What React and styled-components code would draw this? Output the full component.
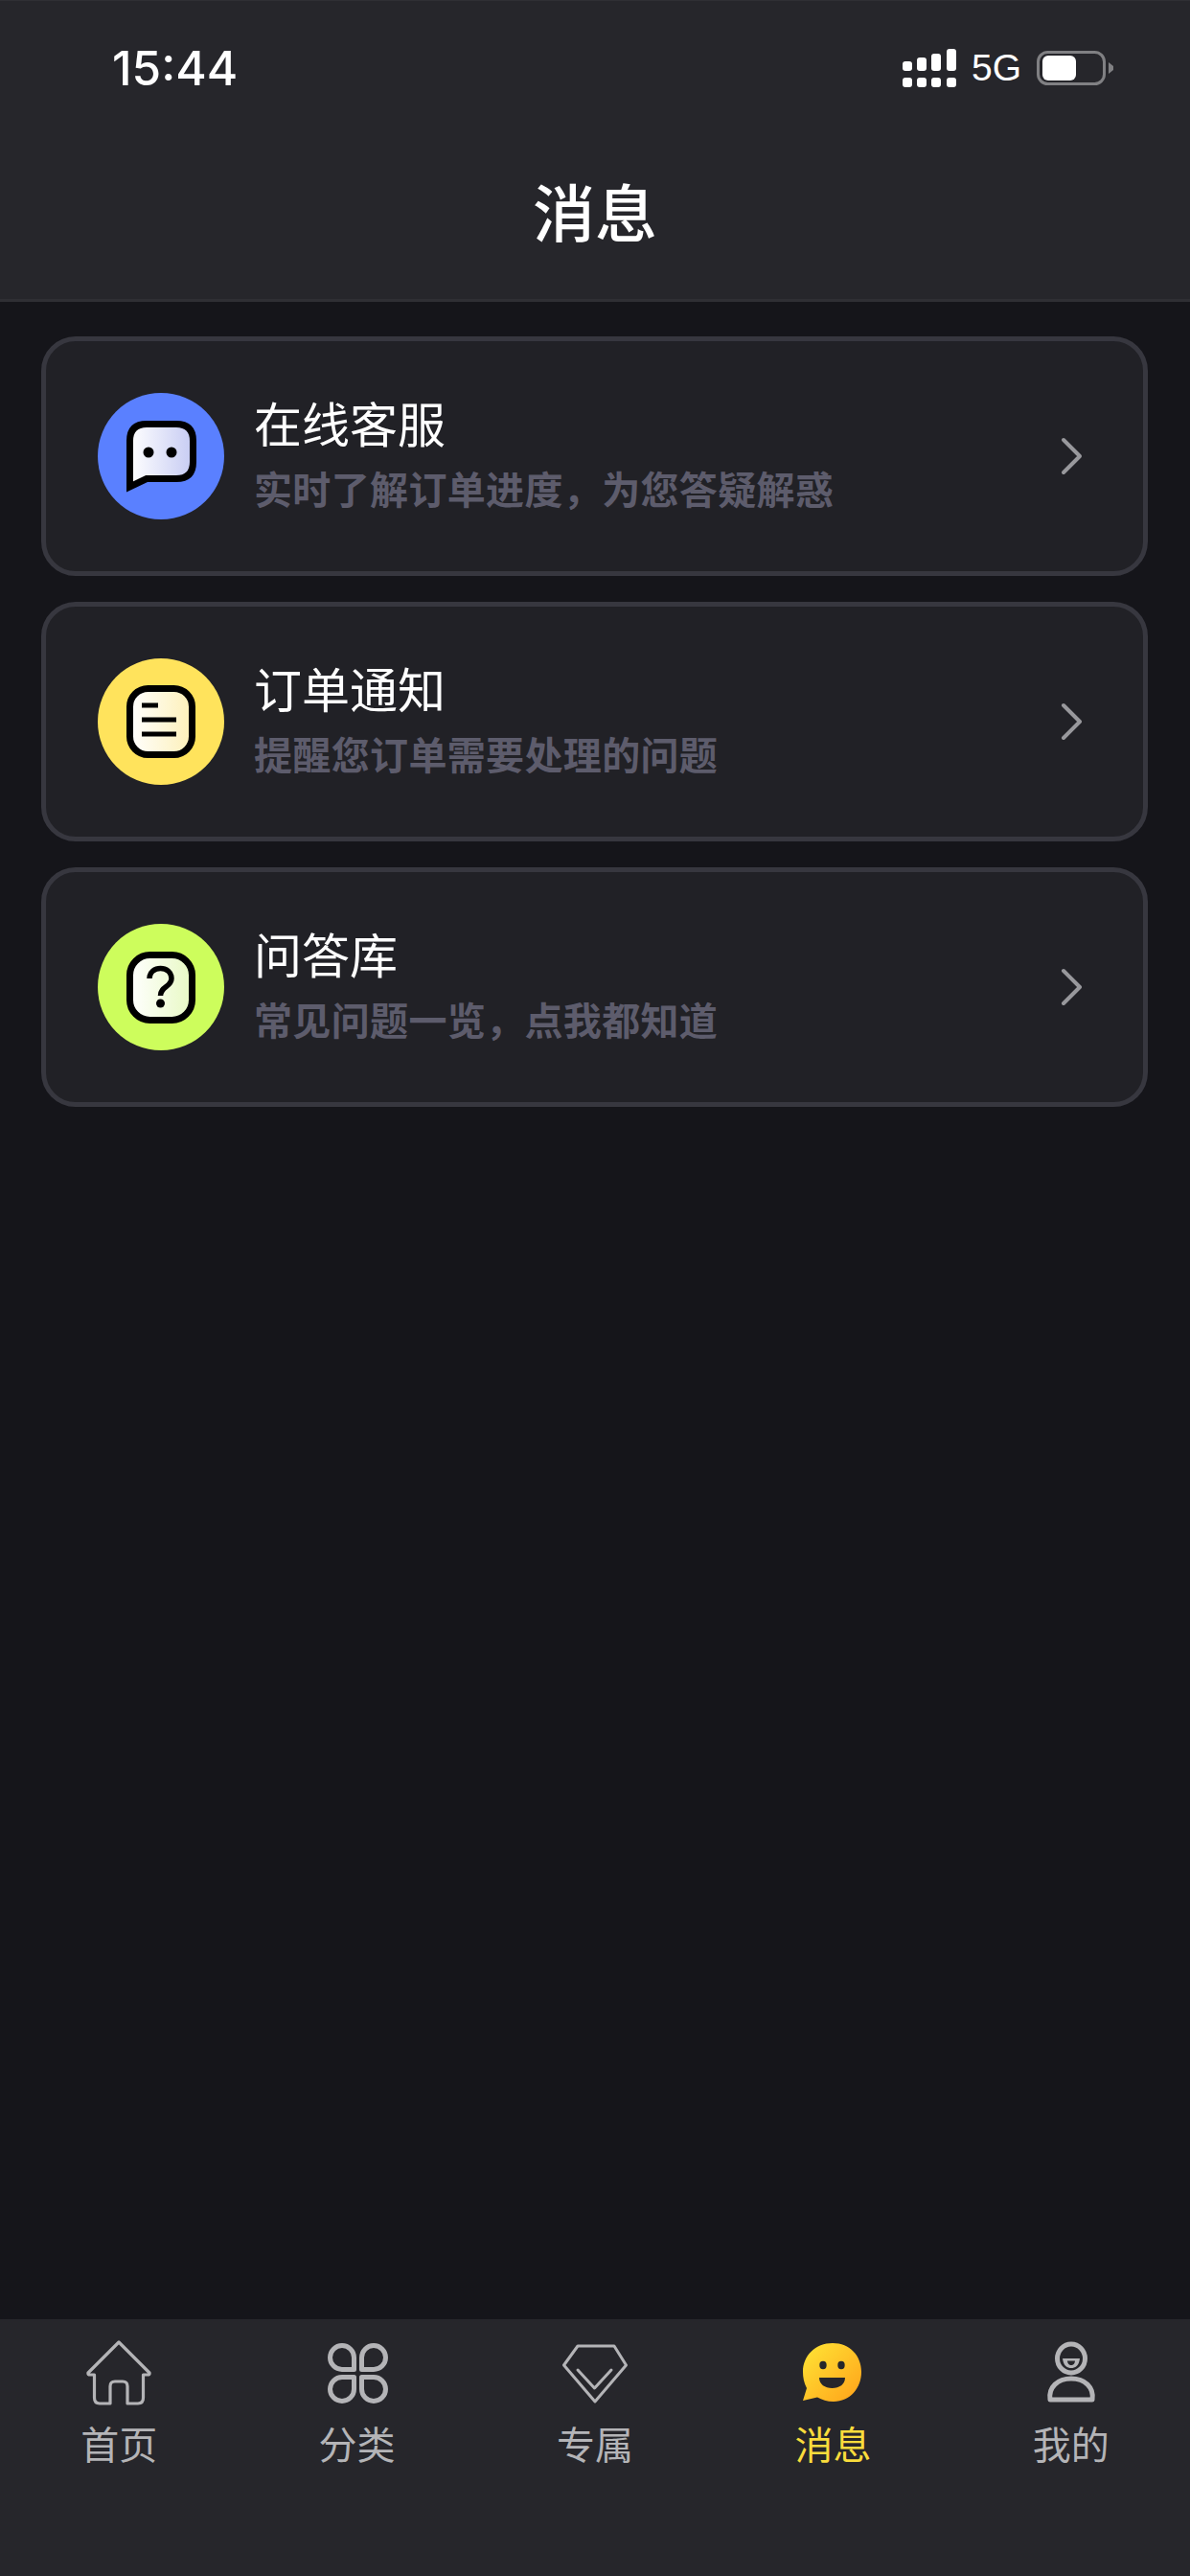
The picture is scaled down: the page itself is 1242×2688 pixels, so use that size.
import React from 'react'
import styled, { createGlobalStyle } from 'styled-components'

const GlobalStyle = createGlobalStyle`
    html, body {
        margin: 0;
        padding: 0;
        background: #15151a;
    }
    * {
        box-sizing: border-box;
    }
`

const cjk = `"Noto Sans CJK SC", "Noto Sans", sans-serif`

const Page = styled.div`
    width: 1242px;
    height: 2688px;
    display: flex;
    flex-direction: column;
    background: #15151a;
    font-family: ${cjk};
`

const Header = styled.header`
    height: 315px;
    flex: none;
    background: #26262b;
    border-top: 1px solid #2f2f34;
    border-bottom: 3px solid #2f2f34;
`

const StatusBar = styled.div`
    height: 92px;
    padding: 47px 79px 0 117px;
    display: flex;
    justify-content: space-between;
    align-items: center;
`

const Time = styled.span`
    font-family: Inter, "Liberation Sans", sans-serif;
    font-size: 49.5px;
    font-weight: 500;
    color: #fff;
    line-height: 50px;
`

const StatusRight = styled.div`
    display: flex;
    align-items: center;
    color: #fff;
`

const NetLabel = styled.span`
    font-family: "Liberation Sans", Arial, sans-serif;
    font-size: 39px;
    line-height: 40px;
    margin: 0 16px 0 15px;
`

const Title = styled.h1`
    margin: 0;
    padding-top: 79px;
    text-align: center;
    font-size: 65px;
    font-weight: 500;
    line-height: 94px;
    color: #fff;
`

const List = styled.main`
    flex: 1;
    padding: 36px 44px 0 43px;
    display: flex;
    flex-direction: column;
    gap: 27px;
`

const Card = styled.div`
    height: 250px;
    padding: 0 62px 0 54px;
    display: flex;
    align-items: center;
    background: #212126;
    border: 5px solid #37373f;
    border-radius: 36px;
`

const Badge = styled.div`
    width: 132px;
    height: 132px;
    flex: none;
    border-radius: 50%;
    background: ${p => p.$color};
`

const CardText = styled.div`
    flex: 1;
    margin-left: 31px;
    padding-bottom: 8px;
`

const CardTitle = styled.div`
    font-size: 50px;
    line-height: 60px;
    color: #fff;
`

const CardSub = styled.div`
    margin-top: 14px;
    font-size: 40px;
    font-weight: 600;
    letter-spacing: 0.35px;
    line-height: 50px;
    color: #5d5c6c;
`

const TabBar = styled.nav`
    height: 268px;
    flex: none;
    padding-top: 22px;
    display: grid;
    grid-template-columns: repeat(5, 1fr);
    align-items: start;
    background: #26262b;
`

const Tab = styled.div`
    display: flex;
    flex-direction: column;
    align-items: center;
    color: ${p => (p.$active ? '#f9dc3c' : '#b4b4b7')};
`

const TabLabel = styled.span`
    margin-top: 13px;
    font-size: 40px;
    line-height: 52px;
`

const Icon = styled.svg`
    display: block;
    flex: none;
`

const Signal = () => (
    <Icon width="57" height="40" viewBox="0 0 57 40" fill="#fff">
        <rect x="0" y="13" width="10" height="10" rx="3" />
        <rect x="15" y="9" width="10" height="14" rx="3" />
        <rect x="30" y="5" width="10" height="18" rx="3" />
        <rect x="46" y="0" width="10" height="23" rx="3" />
        <rect x="0" y="30" width="10" height="10" rx="3" />
        <rect x="15" y="30" width="10" height="10" rx="3" />
        <rect x="30" y="30" width="10" height="10" rx="3" />
        <rect x="46" y="30" width="10" height="10" rx="3" />
    </Icon>
)

const Battery = () => (
    <Icon width="81" height="36" viewBox="0 0 81 36">
        <rect x="1.5" y="1.5" width="69" height="33" rx="10" fill="none" stroke="#808083" strokeWidth="3" />
        <rect x="6" y="5" width="35" height="26" rx="6" fill="#fff" />
        <path d="M75 12 L80 16 V20 L75 24 Z" fill="#808083" />
    </Icon>
)

const ChatIcon = () => (
    <Icon width="132" height="132" viewBox="0 0 132 132">
        <defs>
            <linearGradient id="chatFill" x1="0" y1="0" x2="1" y2="0">
                <stop offset="0" stopColor="#ffffff" />
                <stop offset="1" stopColor="#c6cbf3" />
            </linearGradient>
        </defs>
        <path d="M33.5 98 V50 Q33.5 32.5 51 32.5 H82 Q99.5 32.5 99.5 50 V72 Q99.5 89.5 82 89.5 H51 Z" fill="url(#chatFill)" stroke="#000" strokeWidth="7" strokeLinejoin="miter" />
        <circle cx="53" cy="62" r="5.5" fill="#000" />
        <circle cx="77" cy="62" r="5.5" fill="#000" />
    </Icon>
)

const DocIcon = () => (
    <Icon width="132" height="132" viewBox="0 0 132 132">
        <defs>
            <linearGradient id="docFill" x1="0" y1="0" x2="1" y2="0">
                <stop offset="0" stopColor="#ffffff" />
                <stop offset="1" stopColor="#fdf0b8" />
            </linearGradient>
        </defs>
        <rect x="33.5" y="31.5" width="65" height="69" rx="19" fill="url(#docFill)" stroke="#000" strokeWidth="7" />
        <path d="M46 49 H63 M46 64 H82 M46 79 H82" stroke="#000" strokeWidth="5" fill="none" />
    </Icon>
)

const QuestionIcon = () => (
    <Icon width="132" height="132" viewBox="0 0 132 132">
        <defs>
            <linearGradient id="askFill" x1="0" y1="0" x2="1" y2="0">
                <stop offset="0" stopColor="#ffffff" />
                <stop offset="1" stopColor="#e8f9c4" />
            </linearGradient>
        </defs>
        <rect x="33.5" y="32.5" width="65" height="68" rx="21" fill="url(#askFill)" stroke="#000" strokeWidth="7" />
        <path d="M54 57 C54 43 77 43 77 57 C77 66 65.5 65 65.5 75" fill="none" stroke="#000" strokeWidth="5.5" />
        <circle cx="65.5" cy="83" r="4.5" fill="#000" />
    </Icon>
)

const Chevron = () => (
    <Icon width="24" height="40" viewBox="0 0 24 40">
        <path d="M3 3 L20 20 L3 37" fill="none" stroke="#98989c" strokeWidth="4" strokeLinecap="round" strokeLinejoin="round" />
    </Icon>
)

const HomeIcon = () => (
    <Icon width="68" height="68" viewBox="0 0 68 68" fill="none" stroke="currentColor" strokeWidth="3.2" strokeLinejoin="round">
        <path d="M34 2 L66 34 Q66.5 36 64 36 H59.5 V60 Q59.5 66 54 66 H43 V48 Q43 43 38 43 H30 Q25 43 25 48 V66 H14 Q8.5 66 8.5 60 V36 H4 Q1.5 36 2 34 Z" />
    </Icon>
)

const CloverIcon = () => (
    <Icon width="68" height="68" viewBox="0 0 68 68" fill="none" stroke="currentColor" strokeWidth="5" strokeLinejoin="round">
        <path d="M30.5 30.5 H18 A12.5 12.5 0 1 1 30.5 18 Z" />
        <path d="M38.5 30.5 H51 A12.5 12.5 0 1 0 38.5 18 Z" />
        <path d="M30.5 38.5 H18 A12.5 12.5 0 1 0 30.5 51 Z" />
        <path d="M38.5 38.5 H51 A12.5 12.5 0 1 1 38.5 51 Z" />
    </Icon>
)

const DiamondIcon = () => (
    <Icon width="68" height="68" viewBox="0 0 68 68" fill="none" stroke="currentColor" strokeWidth="3" strokeLinejoin="round" strokeLinecap="round">
        <path d="M16 6 H54 L66.5 26 L34 64 L1.5 26 Z" />
        <path d="M16 31 L33.5 50 L51 31" />
    </Icon>
)

const FaceIcon = () => (
    <Icon width="68" height="68" viewBox="0 0 68 68">
        <defs>
            <linearGradient id="faceFill" x1="0.1" y1="0.1" x2="0.9" y2="0.9">
                <stop offset="0" stopColor="#ffdf33" />
                <stop offset="1" stopColor="#ffa81c" />
            </linearGradient>
        </defs>
        <path d="M34 3 C52 3 64 16 64 33 C64 50 52 64 35 64 C28 64 23 62 18 59.5 L3 63 L7 50 C4 44 3 39 3 33 C3 16 16 3 34 3 Z" fill="url(#faceFill)" />
        <ellipse cx="24" cy="26" rx="3.7" ry="4.2" fill="#26262b" />
        <ellipse cx="43" cy="26" rx="3.7" ry="4.2" fill="#26262b" />
        <path d="M20 39 H47 C47 46 41 50 33.5 50 C26 50 20 46 20 39 Z" fill="#26262b" />
    </Icon>
)

const UserIcon = () => (
    <Icon width="68" height="68" viewBox="0 0 68 68" fill="none" stroke="currentColor" strokeWidth="5">
        <ellipse cx="34" cy="19" rx="14.5" ry="15" />
        <path d="M25 19 H43 C42 27 38 29 34 29 C30 29 26 27 25 19 Z" fill="currentColor" stroke="none" />
        <path d="M30 21.5 H38 C37.5 25 36 26 34 26 C32 26 30.5 25 30 21.5 Z" fill="#26262b" stroke="none" />
        <path d="M12 62 C10 49 20 40 34 40 C48 40 58 49 56 62 Q56 62 54 62 H14 Z" strokeLinejoin="round" />
    </Icon>
)

const cards = [
    { title: '在线客服', sub: '实时了解订单进度，为您答疑解惑', color: '#5a80ff', icon: <ChatIcon /> },
    { title: '订单通知', sub: '提醒您订单需要处理的问题', color: '#ffe35c', icon: <DocIcon /> },
    { title: '问答库', sub: '常见问题一览，点我都知道', color: '#cdfd5c', icon: <QuestionIcon /> },
]

const tabs = [
    { label: '首页', icon: <HomeIcon /> },
    { label: '分类', icon: <CloverIcon /> },
    { label: '专属', icon: <DiamondIcon /> },
    { label: '消息', icon: <FaceIcon />, active: true },
    { label: '我的', icon: <UserIcon /> },
]

const App = () => {
    return (
        <Page>
            <GlobalStyle />
            <Header>
                <StatusBar>
                    <Time>15:44</Time>
                    <StatusRight>
                        <Signal />
                        <NetLabel>5G</NetLabel>
                        <Battery />
                    </StatusRight>
                </StatusBar>
                <Title>消息</Title>
            </Header>
            <List>
                {cards.map((card) => (
                    <Card key={card.title}>
                        <Badge $color={card.color}>{card.icon}</Badge>
                        <CardText>
                            <CardTitle>{card.title}</CardTitle>
                            <CardSub>{card.sub}</CardSub>
                        </CardText>
                        <Chevron />
                    </Card>
                ))}
            </List>
            <TabBar>
                {tabs.map((tab) => (
                    <Tab key={tab.label} $active={tab.active}>
                        {tab.icon}
                        <TabLabel>{tab.label}</TabLabel>
                    </Tab>
                ))}
            </TabBar>
        </Page>
    )
}

export default App
